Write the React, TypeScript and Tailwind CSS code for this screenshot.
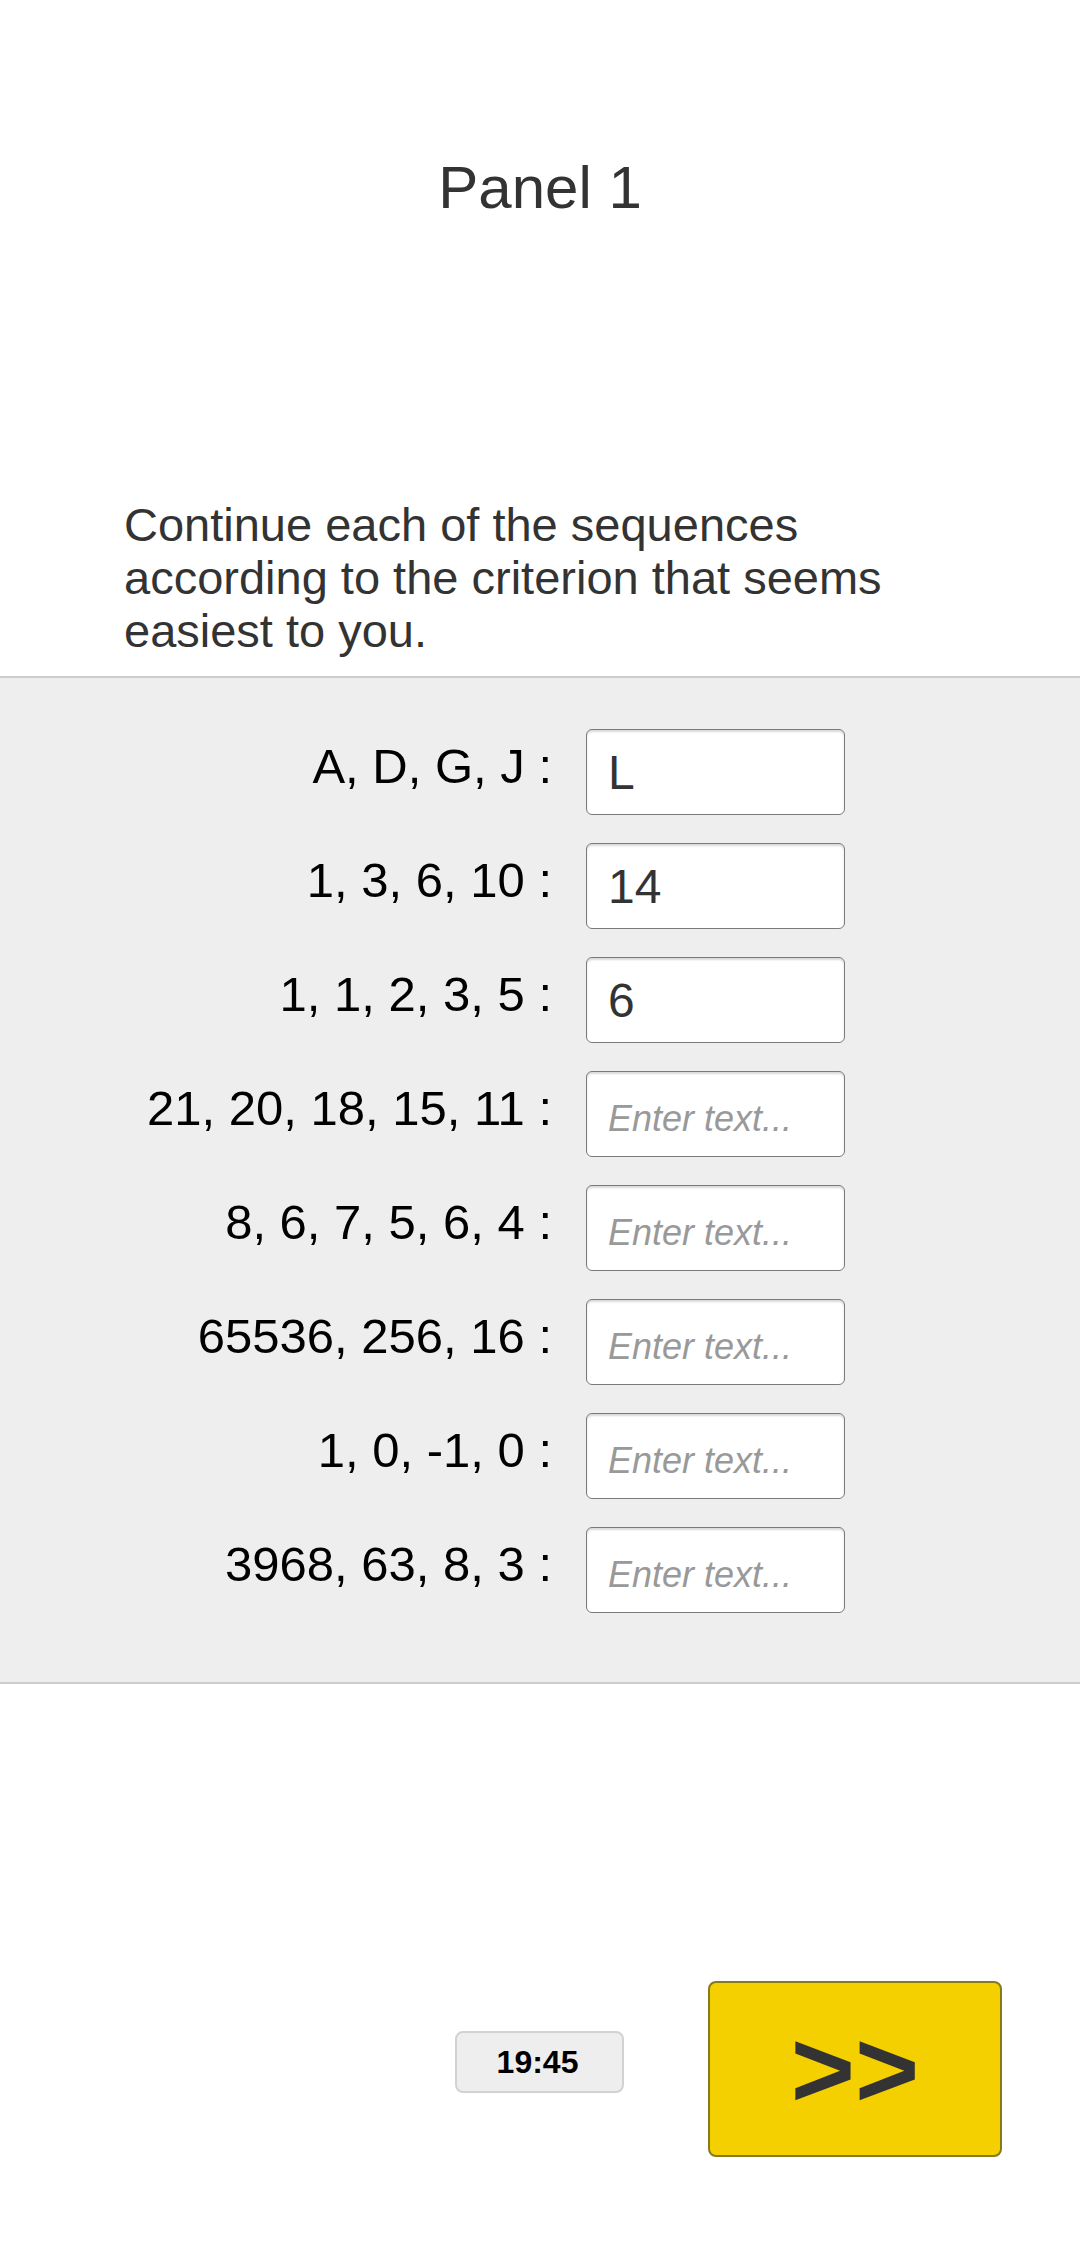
import { useState } from 'react'

const rows = [
  { label: 'A, D, G, J :', value: 'L' },
  { label: '1, 3, 6, 10 :', value: '14' },
  { label: '1, 1, 2, 3, 5 :', value: '6' },
  { label: '21, 20, 18, 15, 11 :', value: '' },
  { label: '8, 6, 7, 5, 6, 4 :', value: '' },
  { label: '65536, 256, 16 :', value: '' },
  { label: '1, 0, -1, 0 :', value: '' },
  { label: '3968, 63, 8, 3 :', value: '' },
]

const App = () => {
  const [answers, setAnswers] = useState<string[]>(rows.map((r) => r.value))

  const updateAnswer = (index: number, text: string) => {
    setAnswers((prev) => prev.map((a, i) => (i === index ? text : a)))
  }

  return (
    <div className="min-h-screen bg-white font-['Liberation_Sans',Arial,sans-serif] text-[#333]">
      {/* Title */}
      <h1 className="pt-[155px] text-center text-[60px] leading-[66px] font-normal">Panel 1</h1>

      {/* Instruction */}
      <p className="mt-[277px] px-[124px] text-[47px] leading-[53px]">
        Continue each of the sequences according to the criterion that seems easiest to you.
      </p>

      {/* Sequences */}
      <div className="mt-[19px] border-y-2 border-[#cccccc] bg-[#eeeeee] pt-[51px] pb-[69px]">
        <div className="flex flex-col gap-[28px]">
          {rows.map((row, index) => (
            <div key={index} className="flex items-center">
              <label className="w-[552px] pb-[12px] text-right text-[49px] leading-[56px] text-black">
                {row.label}
              </label>
              <input
                type="text"
                value={answers[index]}
                onChange={(e) => updateAnswer(index, e.target.value)}
                placeholder="Enter text..."
                className="ml-[34px] h-[86px] w-[259px] rounded-[6px] border border-[#7a7a7a] bg-white pl-[21px] text-[48px] text-[#333] shadow-[inset_0_2px_2px_rgba(0,0,0,0.15)] outline-none placeholder:text-[36px] placeholder:italic placeholder:text-[#999]"
              />
            </div>
          ))}
        </div>
      </div>

      {/* Footer */}
      <div className="flex items-start justify-end gap-[84px] pt-[297px] pr-[78px]">
        <div className="mt-[50px] w-[169px] rounded-[8px] border-2 border-[#d2d2d2] bg-[#eeeeee] pr-[4px] text-center text-[32px] leading-[58px] font-bold text-black">
          19:45
        </div>
        <button className="flex h-[176px] w-[294px] items-center justify-center rounded-[8px] border-2 border-[#857a1c] bg-[#f4d000] text-[110px] leading-none font-bold text-[#333]">
          &gt;&gt;
        </button>
      </div>
    </div>
  )
}

export default App
